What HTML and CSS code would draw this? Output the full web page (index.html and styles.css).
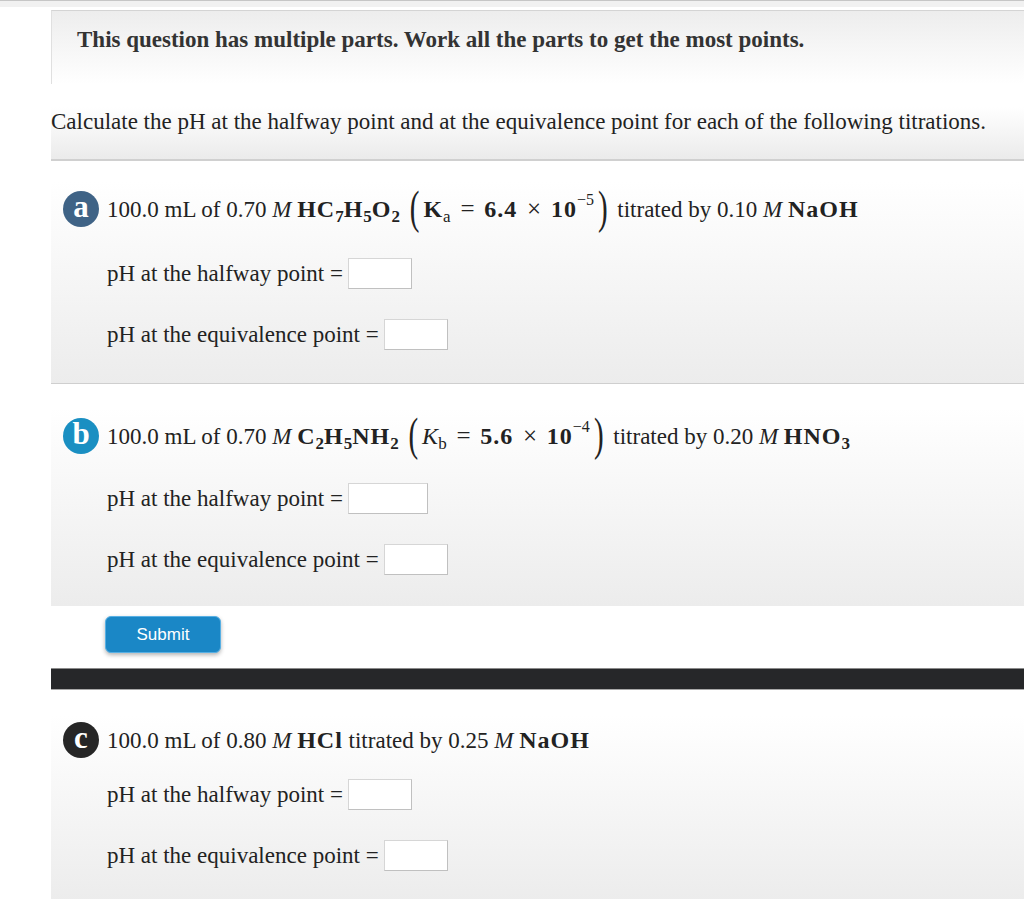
FILE: index.html
```html
<!DOCTYPE html>
<html>
<head>
<meta charset="utf-8">
<link rel="stylesheet" href="styles.css">
</head>
<body>
<div class="topbar"></div>
<div class="main">
  <div class="header">This question has multiple parts. Work all the parts to get the most points.</div>
  <div class="intro">Calculate the pH at the halfway point and at the equivalence point for each of the following titrations.</div>

  <div class="part">
    <div class="part-body part-body-a bordered">
      <div class="q q-tall">
        <span class="badge badge-a">a</span>
        <span class="qtext">100.0 mL of 0.70 <i class="mi">M</i> <span class="chem">HC<sub>7</sub>H<sub>5</sub>O<sub>2</sub></span> <span class="paren">(</span><span class="chem">K<sub class="up">a</sub></span> <span class="op">=</span> <span class="chem">6.4</span> <span class="op">×</span> <span class="chem">10<sup>−5</sup></span><span class="paren">)</span> titrated by 0.10 <i class="mi">M</i> <span class="chem">NaOH</span></span>
      </div>
      <div class="row">pH at the halfway point =<span class="box"></span></div>
      <div class="row">pH at the equivalence point =<span class="box"></span></div>
    </div>
  </div>

  <div class="part part-b">
    <div class="part-body">
      <div class="q q-tall q-b">
        <span class="badge badge-b">b</span>
        <span class="qtext">100.0 mL of 0.70 <i class="mi">M</i> <span class="chem">C<sub>2</sub>H<sub>5</sub>NH<sub>2</sub></span> <span class="paren">(</span><i class="mi mk">K</i><sub class="up">b</sub> <span class="op">=</span> <span class="chem">5.6</span> <span class="op">×</span> <span class="chem">10<sup>−4</sup></span><span class="paren">)</span> titrated by 0.20 <i class="mi">M</i> <span class="chem">HNO<sub>3</sub></span></span>
      </div>
      <div class="row">pH at the halfway point =<span class="box box-wide"></span></div>
      <div class="row">pH at the equivalence point =<span class="box"></span></div>
    </div>
  </div>

  <div class="submit-area">
    <button class="submit">Submit</button>
  </div>
  <div class="darkbar"></div>

  <div class="part part-c">
    <div class="part-body part-body-c">
      <div class="q">
        <span class="badge badge-c">c</span>
        <span class="qtext">100.0 mL of 0.80 <i class="mi">M</i> <span class="chem">HCl</span> titrated by 0.25 <i class="mi">M</i> <span class="chem">NaOH</span></span>
      </div>
      <div class="row">pH at the halfway point =<span class="box"></span></div>
      <div class="row">pH at the equivalence point =<span class="box"></span></div>
    </div>
  </div>
</div>
</body>
</html>
```
FILE: styles.css
```css
html, body {
  margin: 0;
  padding: 0;
  background: #fff;
}
body {
  font-family: "Liberation Serif", "Times New Roman", serif;
  color: #222;
  overflow: hidden;
}
.topbar {
  height: 6px;
  border-top: 1px solid #c6c6c6;
  background: #f1f1f1;
  margin-bottom: 3px;
}
.main {
  margin-left: 51px;
}
.header {
  height: 74px;
  box-sizing: border-box;
  border-top: 1px solid #d4d4d4;
  border-left: 1px solid #e0e0e0;
  background: linear-gradient(to bottom, #ededed, #ffffff);
  padding: 16px 0 0 25px;
  font-weight: bold;
  font-size: 23px;
  line-height: 26px;
  color: #333;
}
.intro {
  padding: 25px 0 24px 0;
  font-size: 23px;
  line-height: 26px;
  background: linear-gradient(to bottom, #ffffff 30%, #ebebeb);
  border-bottom: 2px solid #d0d0d0;
}
.part {
  padding-top: 20px;
}
.part-b {
  padding-top: 24px;
}
.part-c {
  padding-top: 0;
}
.part-body {
  background: linear-gradient(to bottom, #ffffff, #ececec);
  padding: 10px 0 31px 12px;
  font-size: 23px;
}
.part-body-a {
  padding-bottom: 33px;
}
.part-body-c {
  padding-top: 7px;
}
.bordered {
  border-bottom: 1px solid #cfcfcf;
}
.q {
  display: flex;
  align-items: center;
  height: 36px;
  margin-bottom: 21px;
  white-space: nowrap;
}
.q-tall {
  margin-bottom: 31px;
}
.q-b {
  margin-bottom: 29px;
}
.badge {
  flex: none;
  width: 36px;
  height: 36px;
  border-radius: 50%;
  color: #fff;
  font-weight: bold;
  font-size: 31px;
  line-height: 32px;
  text-align: center;
  margin-right: 8px;
}
.badge-a { background: #3f6386; }
.badge-b { background: #1a8fc2; }
.badge-c { background: #262626; }
.qtext {
  font-size: 23px;
}
.mi {
  font-style: italic;
}
.mk {
  font-size: 24px;
}
.chem {
  font-weight: bold;
  font-size: 24px;
  letter-spacing: 1px;
}
.chem sub, .qtext sub {
  font-size: 17px;
  vertical-align: -5px;
  letter-spacing: 0;
}
.chem sub.up, .qtext sub.up {
  font-weight: normal;
}
.chem sup {
  font-size: 16px;
  vertical-align: 12px;
  font-weight: normal;
  letter-spacing: 0;
}
.op {
  font-size: 25px;
  margin: 0 4px;
}
.paren {
  display: inline-block;
  font-size: 29px;
  transform: scaleY(1.6);
  margin: 0 4px;
}
.row {
  display: flex;
  align-items: center;
  height: 31px;
  margin-left: 44px;
  margin-bottom: 30px;
  font-size: 23px;
  white-space: nowrap;
}
.row:last-child {
  margin-bottom: 0;
}
.box {
  display: inline-block;
  width: 62px;
  height: 29px;
  margin-left: 5px;
  background: #fff;
  border: 1px solid #d6d6d6;
  border-right-color: #c0c0c0;
  border-bottom-color: #c0c0c0;
}
.box-wide {
  width: 78px;
}
.submit-area {
  padding: 10px 0 15px 54px;
}
.submit {
  display: block;
  width: 116px;
  height: 37px;
  border: 1px solid #58b0e4;
  border-radius: 6px;
  background: #1a87c6;
  color: #fff;
  font-family: "Liberation Sans", Arial, sans-serif;
  font-size: 17px;
  box-shadow: 0 2px 4px rgba(0, 0, 0, 0.3);
  padding: 0;
}
.darkbar {
  height: 20px;
  background: #262729;
  border-top: 1px solid #8a8a8a;
  border-bottom: 1px solid #a8a8a8;
  margin-bottom: 25px;
}
```
